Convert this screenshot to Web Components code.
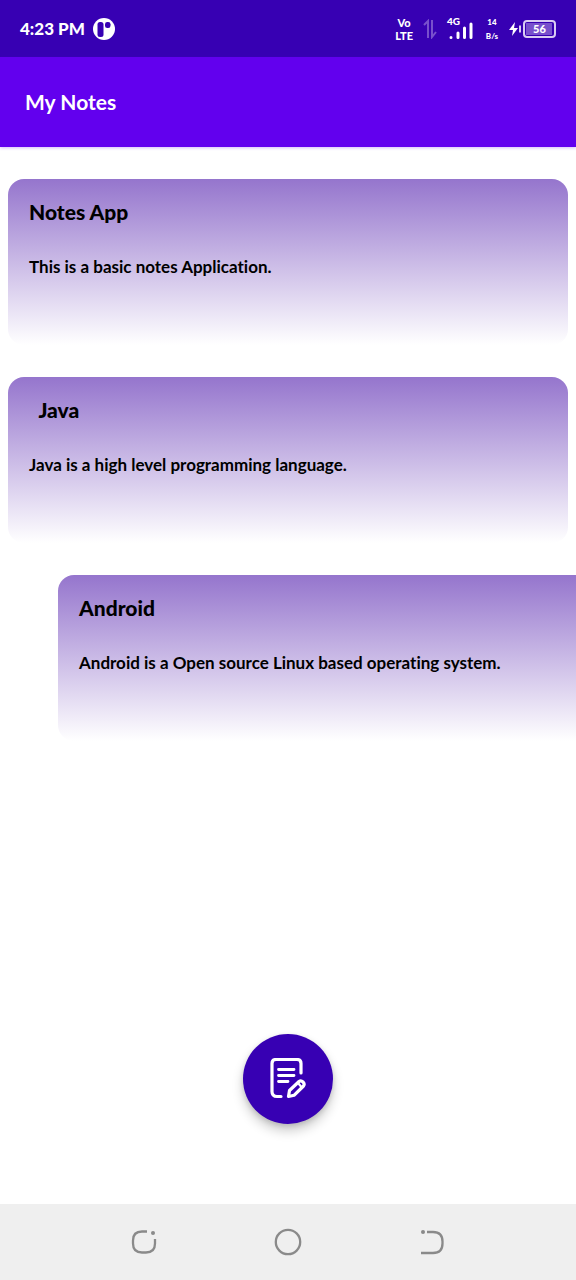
<!DOCTYPE html>
<html lang="en">
<head>
<meta charset="utf-8">
<meta name="viewport" content="width=device-width, initial-scale=1">
<title>My Notes</title>
<style>
  html, body { margin: 0; }
  body { font-family: Lato, "Open Sans", sans-serif; font-variant-ligatures: none; background: #fff; color: #000; }
</style>
</head>
<body>
<notes-app></notes-app>

<template id="status-bar-template">
  <style>
    :host { display: flex; align-items: center; justify-content: space-between; height: 57px; padding: 0 20px; background: #3700b3; color: #fff; font-weight: 900; }
    .group { display: flex; align-items: center; gap: 8px; }
    .time { font-size: 17px; line-height: 24px; }
    .indicators { gap: 10px; }
    .stack { display: flex; flex-direction: column; align-items: center; font-size: 11px; line-height: 13px; }
    .signal { display: flex; flex-direction: column; font-size: 10px; line-height: 10px; height: 26px; width: 28px; }
    .signal svg { margin: -4px 0 0 2px; }
    .rate { font-size: 8px; line-height: 14px; width: 14px; }
    .power { gap: 2px; }
    .battery { box-sizing: border-box; width: 33px; height: 18px; border: 2px solid #d9ccf2; border-radius: 4px; background: linear-gradient(#7850cc, #7850cc) 1px 1px / 26px 12px no-repeat; font-size: 11px; line-height: 14px; text-align: center; }
    svg { display: block; flex: none; }
  </style>
  <div class="group">
    <span class="time">4:23 PM</span>
    <svg width="22" height="22" viewBox="0 0 22 22" aria-hidden="true">
      <circle cx="11" cy="11" r="11" fill="#fff"/>
      <rect x="4.5" y="4" width="6" height="15" rx="2.5" fill="#3700b3"/>
      <rect x="12" y="4" width="5.5" height="6" rx="2.3" fill="#3700b3"/>
    </svg>
  </div>
  <div class="group indicators">
    <div class="stack"><span>Vo</span><span>LTE</span></div>
    <svg width="14" height="20" viewBox="0 0 14 20" fill="none" stroke="#7850cc" stroke-width="2" aria-hidden="true">
      <path d="M1 6 5 2v17M9 1v17l4-5"/>
    </svg>
    <div class="signal"><span>4G</span>
      <svg width="24" height="18" viewBox="0 0 24 18" stroke="#fff" stroke-width="3" stroke-linecap="round" aria-hidden="true">
        <path d="M2 15.5v.1M9 11v4.500M15.500 6v9.500M22 2v13.500"/>
      </svg>
    </div>
    <div class="stack rate"><span>14</span><span>B/s</span></div>
    <div class="group power">
      <svg width="12" height="16" viewBox="0 0 12 16" aria-hidden="true">
        <path d="M6 1 0 9h4l-1 6 6-8H5z" fill="#fff"/>
        <path d="M11 4.500v7" stroke="#d9ccf2" stroke-width="2"/>
      </svg>
      <div class="battery">56</div>
    </div>
  </div>
</template>

<template id="app-bar-template">
  <style>
    :host { display: flex; align-items: center; height: 90px; padding: 0 25px; background: #6200ee; color: #fff; box-shadow: 0 1px 3px #6200ee44; }
    h1 { margin: 0; font-size: 21px; line-height: 28px; font-weight: 700; }
  </style>
  <h1><slot></slot></h1>
</template>

<template id="note-card-template">
  <style>
    :host { display: block; box-sizing: border-box; min-height: 166px; padding: 19px 21px; border-radius: 16px; background: linear-gradient(#9575cd, #fff); }
    :host([swiped]) { margin: 0 -50px 0 50px; }
    h2 { margin: 0 0 28px; font-size: 21px; line-height: 28px; font-weight: 900; white-space: pre; }
    p { margin: 0; font-size: 17px; line-height: 26px; font-weight: 700; }
  </style>
  <h2><slot name="title"></slot></h2>
  <p><slot></slot></p>
</template>

<template id="add-button-template">
  <style>
    :host { display: block; }
    button { display: grid; place-items: center; width: 90px; height: 90px; padding: 0; border: 0; border-radius: 50%; background: #3700b3; box-shadow: 0 7px 12px #0003, 0 2px 5px #0002; }
  </style>
  <button type="button" aria-label="Add note">
    <svg width="38" height="42" viewBox="1 1 38 42" fill="none" stroke="#fff" stroke-linecap="round" stroke-linejoin="round" aria-hidden="true">
      <path d="M13 39.500H9q-5 0-5-5v-28q0-4 4-4h21q4 0 4 4V16" stroke-width="3.200"/>
      <path d="M10.500 12.500H26M10.500 18.500H26M10.500 24.500H20" stroke-width="2.800"/>
      <path d="M20.500 39.500 21.500 33.500 31 24.500Q33 23 35 25T35.500 29L26 38.300Z" stroke-width="3.200"/>
      <path d="M30.500 26.500 33 29.500" stroke-width="2.200"/>
    </svg>
  </button>
</template>

<template id="nav-bar-template">
  <style>
    :host { display: grid; grid-template-columns: repeat(3, 1fr); padding: 0 72px; height: 76px; background: #efefef; }
    button { display: grid; place-items: center; padding: 0; border: 0; background: none; }
    svg { fill: none; stroke: #8a8a8a; stroke-width: 2.300; }
    .dot { fill: #8a8a8a; stroke: none; }
  </style>
  <button type="button" aria-label="Recent apps">
    <svg width="28" height="28" viewBox="0 0 28 28"><path d="M17 3.500h-5q-9 0-9 9v3q0 9 9 9h4q9 0 9-9V11"/><circle class="dot" cx="23" cy="5" r="2"/></svg>
  </button>
  <button type="button" aria-label="Home">
    <svg width="28" height="28" viewBox="0 0 28 28"><circle cx="14" cy="14" r="12.200"/></svg>
  </button>
  <button type="button" aria-label="Back">
    <svg width="28" height="28" viewBox="0 0 28 28"><path d="M9 4h6q9.500 0 9.500 9.500v2Q24.500 25 15 25H3"/><circle class="dot" cx="5" cy="4" r="2"/></svg>
  </button>
</template>

<template id="notes-app-template">
  <style>
    :host { display: flex; flex-direction: column; min-height: 100vh; overflow: hidden; }
    main { flex: 1; display: flex; flex-direction: column; padding: 32px 8px 80px; overflow: hidden; }
    .list { display: flex; flex-direction: column; gap: 32px; }
    add-button { align-self: center; margin-top: auto; }
  </style>
  <status-bar></status-bar>
  <app-bar>My Notes</app-bar>
  <main>
    <section class="list" aria-label="Notes">
      <note-card><span slot="title">Notes App</span>This is a basic notes Application.</note-card>
      <note-card><span slot="title">  Java</span>Java is a high level programming language.</note-card>
      <note-card swiped><span slot="title">Android</span>Android is a Open source Linux based operating system.</note-card>
    </section>
    <add-button></add-button>
  </main>
  <nav-bar></nav-bar>
</template>

<script>
  class TemplateElement extends HTMLElement {
    constructor() {
      super();
      const template = document.getElementById(this.localName + '-template');
      this.attachShadow({ mode: 'open' }).append(template.content.cloneNode(true));
    }
  }
  customElements.define('status-bar', class StatusBar extends TemplateElement {});
  customElements.define('app-bar', class AppBar extends TemplateElement {});
  customElements.define('note-card', class NoteCard extends TemplateElement {});
  customElements.define('add-button', class AddButton extends TemplateElement {});
  customElements.define('nav-bar', class NavBar extends TemplateElement {});
  customElements.define('notes-app', class NotesApp extends TemplateElement {});
</script>
</body>
</html>
